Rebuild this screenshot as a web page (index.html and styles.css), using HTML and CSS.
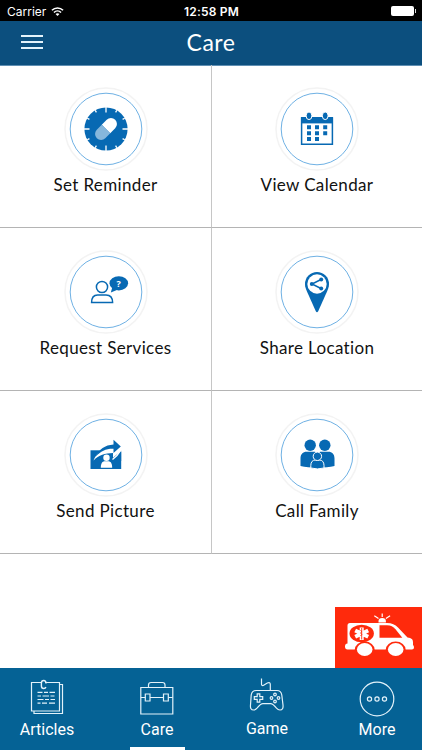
FILE: index.html
```html
<!DOCTYPE html>
<html lang="en">
<head>
    <meta charset="UTF-8">
    <meta name="viewport" content="width=device-width, initial-scale=1.0">
    <title>Care</title>
    <link rel="stylesheet" href="styles.css">
</head>
<body>
    <div class="status-bar">
        <div class="carrier">
            <span>Carrier</span>
            <svg class="wifi" viewBox="0 0 14 11">
                <g fill="none" stroke="#fff" stroke-width="1.7">
                    <path d="M1 4.2a8.5 8.5 0 0 1 12 0"/>
                    <path d="M3.2 6.6a5.4 5.4 0 0 1 7.6 0"/>
                </g>
                <path d="M7 10.4L4.9 8.3a3 3 0 0 1 4.2 0z" fill="#fff"/>
            </svg>
        </div>
        <div class="clock">12:58 PM</div>
        <div class="battery-wrap">
            <span class="battery"></span>
            <span class="battery-tip"></span>
        </div>
    </div>

    <header class="navbar">
        <button class="menu"><span></span><span></span><span></span></button>
        <h1>Care</h1>
    </header>

    <main class="content">
        <div class="grid">
            <a class="cell">
                <svg class="icon" viewBox="0 0 84 84">
                    <circle class="outer" cx="42" cy="42" r="41"/>
                    <circle class="ring" cx="42" cy="42" r="35.8"/>
                    <circle class="fill" cx="42" cy="42" r="21.6"/>
                    <g stroke="#fff" stroke-width="1.3">
                        <path d="M42 20v5.5M42 58.5V64M20 42h5.5M58.5 42H64"/>
                        <path d="M31.2 23.3l1.2 2.1M52.8 23.3l-1.2 2.1M31.2 60.7l1.2-2.1M52.8 60.7l-1.2-2.1M23.3 31.2l2.1 1.2M23.3 52.8l2.1-1.2M60.7 31.2l-2.1 1.2M60.7 52.8l-2.1-1.2"/>
                    </g>
                    <g transform="rotate(45 42 42)">
                        <path d="M36 42v-7a6 6 0 0 1 12 0v7z" fill="#fff"/>
                        <path d="M36 42v7a6 6 0 0 0 12 0v-7z" fill="#86b7dc"/>
                    </g>
                </svg>
                <span class="label">Set Reminder</span>
            </a>
            <a class="cell">
                <svg class="icon" viewBox="0 0 84 84">
                    <circle class="outer" cx="42" cy="42" r="41"/>
                    <circle class="ring" cx="42" cy="42" r="35.8"/>
                    <path class="line" d="M26.6 31h30.8v26.2H26.6z"/>
                    <path class="fill" d="M26 30h32v6.4H26z"/>
                    <g class="fill" stroke="#fff" stroke-width="1">
                        <ellipse cx="34" cy="28.8" rx="2.9" ry="3.8"/>
                        <ellipse cx="50.2" cy="28.8" rx="2.9" ry="3.8"/>
                    </g>
                    <path class="fill" d="M32 38.3h4v4h-4zM40 38.3h4v4h-4zM48.2 38.3h4v4h-4zM32 44.2h4v4h-4zM40 44.2h4v4h-4zM48.2 44.2h4v4h-4zM32 50.1h4v4h-4zM40 50.1h4v4h-4z"/>
                </svg>
                <span class="label">View Calendar</span>
            </a>
            <a class="cell">
                <svg class="icon" viewBox="0 0 84 84">
                    <circle class="outer" cx="42" cy="42" r="41"/>
                    <circle class="ring" cx="42" cy="42" r="35.8"/>
                    <circle class="line" cx="38" cy="37" r="5.6"/>
                    <path class="line" d="M27.6 52.6c0-5.2 2-7.6 6-7.6h8.4c4.4 0 6.6 2.4 6.6 7.6z"/>
                    <ellipse class="fill" cx="54.8" cy="33.3" rx="9.3" ry="7.1"/>
                    <path class="fill" d="M48.3 37l-1.4 5.4 6.6-2.6z"/>
                    <text class="mark" x="54.7" y="36.6">?</text>
                </svg>
                <span class="label">Request Services</span>
            </a>
            <a class="cell">
                <svg class="icon" viewBox="0 0 84 84">
                    <circle class="outer" cx="42" cy="42" r="41"/>
                    <circle class="ring" cx="42" cy="42" r="35.8"/>
                    <path class="fill" d="M42 22a12 12 0 0 1 12 12c0 3-1 5.3-2.2 8L43.2 61.2q-1.200 2-2.400 0L32.200 42C31 39.300 30 37 30 34a12 12 0 0 1 12-12z"/>
                    <circle cx="42" cy="34" r="9.700" fill="#fff"/>
                    <path class="line" d="M46 29.500L37 34l9 4.500"/>
                    <circle class="fill" cx="36.800" cy="34" r="2"/>
                    <circle class="fill" cx="46.200" cy="29.400" r="2"/>
                    <circle class="fill" cx="46.200" cy="38.600" r="2"/>
                </svg>
                <span class="label">Share Location</span>
            </a>
            <a class="cell">
                <svg class="icon" viewBox="0 0 84 84">
                    <circle class="outer" cx="42" cy="42" r="41"/>
                    <circle class="ring" cx="42" cy="42" r="35.8"/>
                    <path class="fill" d="M26.500 37.300h30.700V56H26.500z"/>
                    <path d="M29.500 47.500C33 39 39 34.500 49 33.200v-6.500l9.500 7.500v2.500l-9.500 8V40c-8 .3-14 2-19.500 7.500z" fill="#fff"/>
                    <path class="fill" d="M31.500 43.800C35 36 41 32 49.500 31.400v-4.600l7.300 6.600-7.300 6.600v-4.200c-7.500-.2-12.500 2.200-18 8z"/>
                    <path class="fill" d="M52.500 43l4.700-4v9h-4.700z"/>
                    <path d="M48.500 46.500q5-3.500 8.700-10" fill="none" stroke="#fff" stroke-width="1.500"/>
                    <circle cx="42.500" cy="44.700" r="3.200" fill="#fff"/>
                    <path d="M36.800 54.700c0-4.500 1.700-6.500 4-6.500h3.400c2.300 0 4 2 4 6.500z" fill="#fff"/>
                </svg>
                <span class="label">Send Picture</span>
            </a>
            <a class="cell">
                <svg class="icon" viewBox="0 0 84 84">
                    <circle class="outer" cx="42" cy="42" r="41"/>
                    <circle class="ring" cx="42" cy="42" r="35.8"/>
                    <circle class="fill" cx="35.200" cy="32.300" r="5.700"/>
                    <circle class="fill" cx="49.800" cy="32.300" r="5.700"/>
                    <path class="fill" d="M25.500 53v-7.500c0-4.500 2.500-6.800 6-6.800h7c2 0 3.300.7 4 1.600.7-.9 2-1.600 4-1.600h7c3.500 0 6 2.300 6 6.800V53q-7 1.600-17 1.600T25.500 53z"/>
                    <g class="fill" stroke="#fff" stroke-width="1">
                        <path d="M35.800 55v-2.500c0-3.500 1.800-5.500 4.500-5.500h4.200c2.700 0 4.500 2 4.500 5.500V55q-6.600 1.800-13.200 0z"/>
                        <circle cx="42.400" cy="43.300" r="4.200"/>
                    </g>
                </svg>
                <span class="label">Call Family</span>
            </a>
        </div>

        <button class="emergency">
            <svg viewBox="0 0 87 61">
                <path d="M15 16h37c5 0 8 1.500 11 4.500l9.500 10c4 .5 5.500 1.500 5.500 5v2.500q1 .8 1 2.500 0 2-2 2H12.500q-2.500 0-2.500-3t2.500-3V18.500q0-2.500 2.500-2.500z" fill="#fff"/>
                <path d="M44.500 18.300h7.500c4 0 6 1.200 8.500 4l6.800 8.500H44.500z" fill="#ff2a0c"/>
                <ellipse cx="26.700" cy="26.500" rx="12.200" ry="8.800" fill="#ff2a0c"/>
                <path d="M26.700 20.500v12.400M20.200 23.500l13 6.200M20.200 29.700l13-6.200" stroke="#fff" stroke-width="4"/>
                <path d="M26.700 21v11.500M25.500 23.500q3 1 0 2.500 3 1.300 0 3" fill="none" stroke="#ff2a0c" stroke-width=".9"/>
                <g fill="#ff2a0c">
                    <path d="M19.700 43a10 8.500 0 0 1 20 0z"/>
                    <path d="M50.700 43a10 8.500 0 0 1 20 0z"/>
                </g>
                <g fill="#fff">
                    <ellipse cx="29.700" cy="42.500" rx="7.800" ry="6.500"/>
                    <ellipse cx="60.700" cy="42.500" rx="7.800" ry="6.500"/>
                </g>
                <path d="M43.500 15.500V14q0-3 3.700-3t3.700 3v1.500z" fill="#fff"/>
                <path d="M47.200 6.500v3.500M39.300 8.800l4.200 2.700M55.100 8.800l-4.200 2.700" stroke="#fff" stroke-width="1.200"/>
            </svg>
        </button>
    </main>

    <nav class="tabs">
        <a class="tab">
            <svg viewBox="0 0 36 36">
                <path d="M12.500 3.500H2.500v28.500h28V3.500H16"/>
                <path d="M31 5.500h2.500V34.500H5V32"/>
                <path d="M17 4.500q0-3-2.300-3T12.400 4v3q0 2.500 2.300 2.500 1.800 0 2.200-1.500" stroke-width="1.400"/>
                <path d="M8.500 13.300h5M15 13.300h4M20.500 13.300h5.500M8.500 17h3.500M13.500 17h6.500M21.500 17h4M8.500 20.500h6M16 20.500h4M21.500 20.500h4.500M8.500 24.200h3M13 24.200h5M20 24.200h6"/>
            </svg>
            <span>Articles</span>
        </a>
        <a class="tab active">
            <svg viewBox="0 0 36 36">
                <path d="M1.800 8.500h32v26.500h-32z"/>
                <path d="M9.500 8.500V6q0-2.500 2.500-2.500h11.500Q26 3.500 26 6v2.500"/>
                <path d="M1.800 18.500h4.500M11 18.500h13.500M29.300 18.500h4.500"/>
                <path d="M6.300 15h4.700v7H6.300zM24.500 15h4.800v7h-4.800z"/>
            </svg>
            <span>Care</span>
        </a>
        <a class="tab game">
            <svg viewBox="0 0 36 36">
                <path d="M12.500.5v5.500q0 2 1.800 1.500l4-2.500q3-1.300 3 1.500v6"/>
                <path d="M7 12.500h21q4 0 4.800 4.500L34 27q.5 5-3 5-2 0-3.500-1.800-3.500-4.500-6-4.500h-7.500q-2.500 0-6 4.500Q6.500 32 4.500 32q-3.500 0-3-5l.7-10Q3 12.500 7 12.500z"/>
                <path d="M8.200 15.800h2.600v2.900h2.900v2.600h-2.900v2.900H8.200v-2.900H5.300v-2.600h2.900z"/>
                <circle cx="26" cy="16.500" r="1.300"/>
                <circle cx="26" cy="23.500" r="1.300"/>
                <circle cx="22.500" cy="20" r="1.300"/>
                <circle cx="29.500" cy="20" r="1.300"/>
            </svg>
            <span>Game</span>
        </a>
        <a class="tab">
            <svg viewBox="0 0 36 36">
                <circle cx="18" cy="20" r="16.800"/>
                <circle cx="10.500" cy="20" r="2.100"/>
                <circle cx="18" cy="20" r="2.100"/>
                <circle cx="25.500" cy="20" r="2.100"/>
            </svg>
            <span>More</span>
        </a>
    </nav>
</body>
</html>
```

FILE: styles.css
```css
* {
    margin: 0;
    padding: 0;
    box-sizing: border-box;
}

body {
    display: flex;
    flex-direction: column;
    width: 422px;
    height: 750px;
    overflow: hidden;
    background: #fff;
    color: #111;
    font-family: Lato, "Open Sans", sans-serif;
}

button {
    border: none;
    background: none;
}

.status-bar {
    display: flex;
    align-items: center;
    height: 21px;
    padding: 1px 6px 0 7px;
    background: #000;
    color: #fff;
    font: 12px Inter, sans-serif;
}

.carrier,
.battery-wrap {
    display: flex;
    flex: 1;
    align-items: center;
}

.carrier {
    gap: 5px;
}

.wifi {
    width: 13px;
    height: 11px;
}

.clock {
    font-weight: 600;
    letter-spacing: 0.2px;
}

.battery-wrap {
    justify-content: flex-end;
    gap: 1px;
}

.battery {
    width: 23px;
    height: 10px;
    border-radius: 2px;
    background: #fff;
}

.battery-tip {
    width: 1px;
    height: 4px;
    background: #ddd;
}

.navbar {
    display: flex;
    align-items: center;
    height: 45px;
    padding: 0 21px;
    border-bottom: 1px solid #5f8fb3;
    background: #0c4f7e;
    color: #fff;
}

.navbar h1 {
    flex: 1;
    padding: 0 22px 2px 0;
    text-align: center;
    font-size: 23px;
    font-weight: 400;
    letter-spacing: 0.5px;
}

.menu {
    display: flex;
    flex-direction: column;
    gap: 4px;
    width: 22px;
    padding-bottom: 2px;
}

.menu span {
    height: 2px;
    background: #e4f3fb;
}

.content {
    display: flex;
    flex: 1;
    flex-direction: column;
    justify-content: space-between;
}

.grid {
    display: grid;
    grid-template-columns: 212px 210px;
    grid-auto-rows: 163px;
    margin-top: -1px;
}

.cell {
    display: flex;
    flex-direction: column;
    align-items: center;
    padding-top: 22px;
    border-bottom: 1px solid #b4b4b4;
}

.cell:nth-child(odd) {
    border-right: 1px solid #c6c6c6;
}

.icon {
    width: 84px;
    height: 84px;
}

.icon .outer {
    fill: #fff;
    stroke: #f3f3f3;
    stroke-width: 1.5;
}

.icon .ring {
    fill: none;
    stroke: #6fb1e4;
    stroke-width: 1;
}

.icon .fill {
    fill: #0769b3;
}

.icon .line {
    fill: none;
    stroke: #0769b3;
    stroke-width: 1.5;
}

.icon .mark {
    fill: #fff;
    font: bold 9px "Open Sans", sans-serif;
    text-anchor: middle;
}

.label {
    margin-top: 2px;
    font-size: 17px;
    line-height: 24px;
    letter-spacing: 0.35px;
}

.emergency {
    align-self: flex-end;
    width: 87px;
    height: 61px;
    background: #ff2a0c;
}

.emergency svg {
    display: block;
    width: 87px;
    height: 61px;
}

.tabs {
    display: flex;
    height: 82px;
    margin-left: -8px;
    background: #056295;
    color: #fff;
    font: 400 16px Roboto, sans-serif;
}

.tab {
    display: flex;
    flex: 0 0 110px;
    flex-direction: column;
    align-items: center;
    padding-top: 11px;
}

.tab svg {
    width: 36px;
    height: 36px;
    overflow: visible;
    fill: none;
    stroke: #e3f2fa;
    stroke-width: 1.2;
}

.tab span {
    margin-top: 5px;
    line-height: 20px;
}

.game {
    padding-top: 10px;
}

.active::after {
    content: "";
    width: 55px;
    height: 3px;
    margin-top: 7px;
    background: #fff;
}
```
